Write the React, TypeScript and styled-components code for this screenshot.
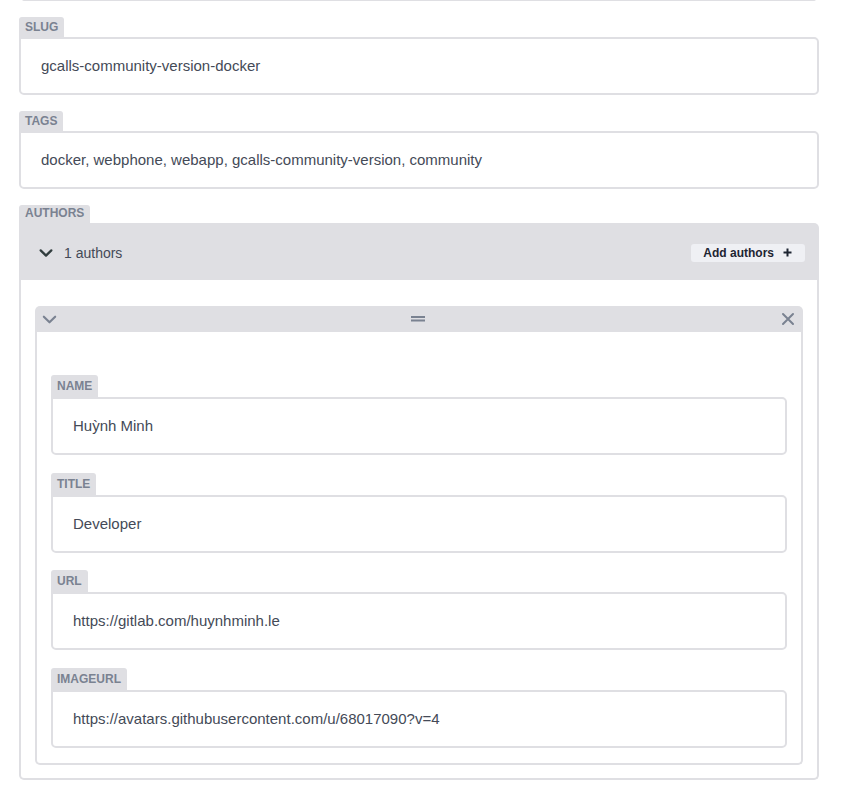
import React from "react";
import styled, { createGlobalStyle } from "styled-components";

const Global = createGlobalStyle`
  html, body { margin: 0; padding: 0; background: #fff; }
  body { font-family: "Liberation Sans", Arial, sans-serif; color: #444a57; }
  * { box-sizing: border-box; }
`;

const Page = styled.div`
  width: 800px;
  margin-left: 19px;
  padding-bottom: 17px;
`;

const PrevEdge = styled.div`
  height: 2px;
  margin: -1px 3px 0;
  border-bottom: 2px solid #dfdfe3;
  border-radius: 0 0 4px 4px;
`;

const Control = styled.div<{ $first?: boolean; $nested?: boolean }>`
  margin-top: ${(p) => (p.$first ? "0" : p.$nested ? "17.6px" : "16px")};
  display: flex;
  flex-direction: column;
  align-items: flex-start;
`;

const Label = styled.label<{ $size?: "s" | "m" | "l" }>`
  display: inline-flex;
  align-items: center;
  height: ${(p) => (p.$size === "s" ? "18px" : p.$size === "l" ? "22px" : "20px")};
  color: #7a8291;
  background: #dfdfe3;
  font-size: 12px;
  line-height: 15px;
  font-weight: 700;
  text-transform: uppercase;
  padding: ${(p) => (p.$size === "s" ? "0 6px 1px" : "1px 6px 0")};
  border-radius: 3px 3px 0 0;
`;

const Input = styled.div`
  width: 100%;
  height: 58px;
  display: flex;
  align-items: center;
  font-size: 15px;
  line-height: 22px;
  padding: 0 20px;
  background: #fff;
  color: #444a57;
  border: 2px solid #dfdfe3;
  border-radius: 0 5px 5px 5px;
  white-space: nowrap;
`;

const ListBox = styled.div`
  width: 100%;
`;

const ListTop = styled.div`
  height: 57px;
  background: #dfdfe3;
  border-radius: 0 5px 0 0;
  display: flex;
  align-items: center;
  padding: 2px 14px 0 19px;
`;

const ToggleBtn = styled.div`
  display: flex;
  align-items: center;
  gap: 10px;
  font-size: 14px;
  color: #444a57;
  flex: 1;
`;

const AddButton = styled.div`
  display: flex;
  align-items: center;
  gap: 9px;
  height: 18px;
  padding: 0 13px 0 12px;
  background: #eff0f4;
  border-radius: 3px;
  font-size: 12px;
  font-weight: 700;
  color: #1e2532;
`;

const ListBody = styled.div`
  border: 2px solid #dfdfe3;
  border-top: 0;
  border-radius: 0 0 5px 5px;
  padding: 26px 14px 13px;
`;

const Item = styled.div`
  width: 100%;
`;

const ItemTop = styled.div`
  height: 26px;
  background: #dfdfe3;
  border-radius: 5px 5px 0 0;
  display: grid;
  grid-template-columns: 1fr auto 1fr;
  align-items: center;
  padding: 0 8px 0 6px;
`;

const ItemBody = styled.div`
  border: 2px solid #dfdfe3;
  border-top: 0;
  border-radius: 0 0 5px 5px;
  padding: 43px 14px 15px;
`;

const Right = styled.div`
  display: flex;
  justify-content: flex-end;
`;

const Chevron = ({ size, color, w }: { size: number; color: string; w: number }) => (
  <svg width={size} height={size} viewBox="0 0 24 24" fill="none">
    <polyline points="4 8 12 16 20 8" stroke={color} strokeWidth={w} strokeLinecap="round" strokeLinejoin="round" />
  </svg>
);

const DragHandle = () => (
  <svg width="16" height="8" viewBox="0 0 16 8">
    <rect x="1" y="1" width="14" height="2" fill="#7a8291" />
    <rect x="1" y="4.5" width="14" height="2" fill="#7a8291" />
  </svg>
);

const CloseIcon = () => (
  <svg width="14" height="14" viewBox="0 0 14 14">
    <path d="M2 2 L12 12 M12 2 L2 12" stroke="#7a8291" strokeWidth="2" strokeLinecap="round" />
  </svg>
);

const PlusIcon = () => (
  <svg width="9" height="9" viewBox="0 0 9 9">
    <path d="M4.5 0.5 V8.5 M0.5 4.5 H8.5" stroke="#1e2532" strokeWidth="2" />
  </svg>
);

const Field = ({
  label,
  value,
  first,
  nested,
}: {
  label: string;
  value: string;
  first?: boolean;
  nested?: boolean;
}) => (
  <Control $first={first} $nested={nested}>
    <Label $size={nested ? "l" : "m"}>{label}</Label>
    <Input>{value}</Input>
  </Control>
);

export default function App() {
  return (
    <>
      <Global />
      <Page>
        <PrevEdge />
        <Field label="slug" value="gcalls-community-version-docker" />
        <Field label="tags" value="docker, webphone, webapp, gcalls-community-version, community" />
        <Control>
          <Label $size="s">authors</Label>
          <ListBox>
            <ListTop>
              <ToggleBtn>
                <Chevron size={16} color="#313d3e" w={3.4} />
                <span>1 authors</span>
              </ToggleBtn>
              <AddButton>
                Add authors <PlusIcon />
              </AddButton>
            </ListTop>
            <ListBody>
              <Item>
                <ItemTop>
                  <Chevron size={17} color="#7a8291" w={3} />
                  <DragHandle />
                  <Right>
                    <CloseIcon />
                  </Right>
                </ItemTop>
                <ItemBody>
                  <Field first nested label="name" value="Huỳnh Minh" />
                  <Field nested label="title" value="Developer" />
                  <Field nested label="url" value="https://gitlab.com/huynhminh.le" />
                  <Field nested label="imageurl" value="https://avatars.githubusercontent.com/u/68017090?v=4" />
                </ItemBody>
              </Item>
            </ListBody>
          </ListBox>
        </Control>
      </Page>
    </>
  );
}
